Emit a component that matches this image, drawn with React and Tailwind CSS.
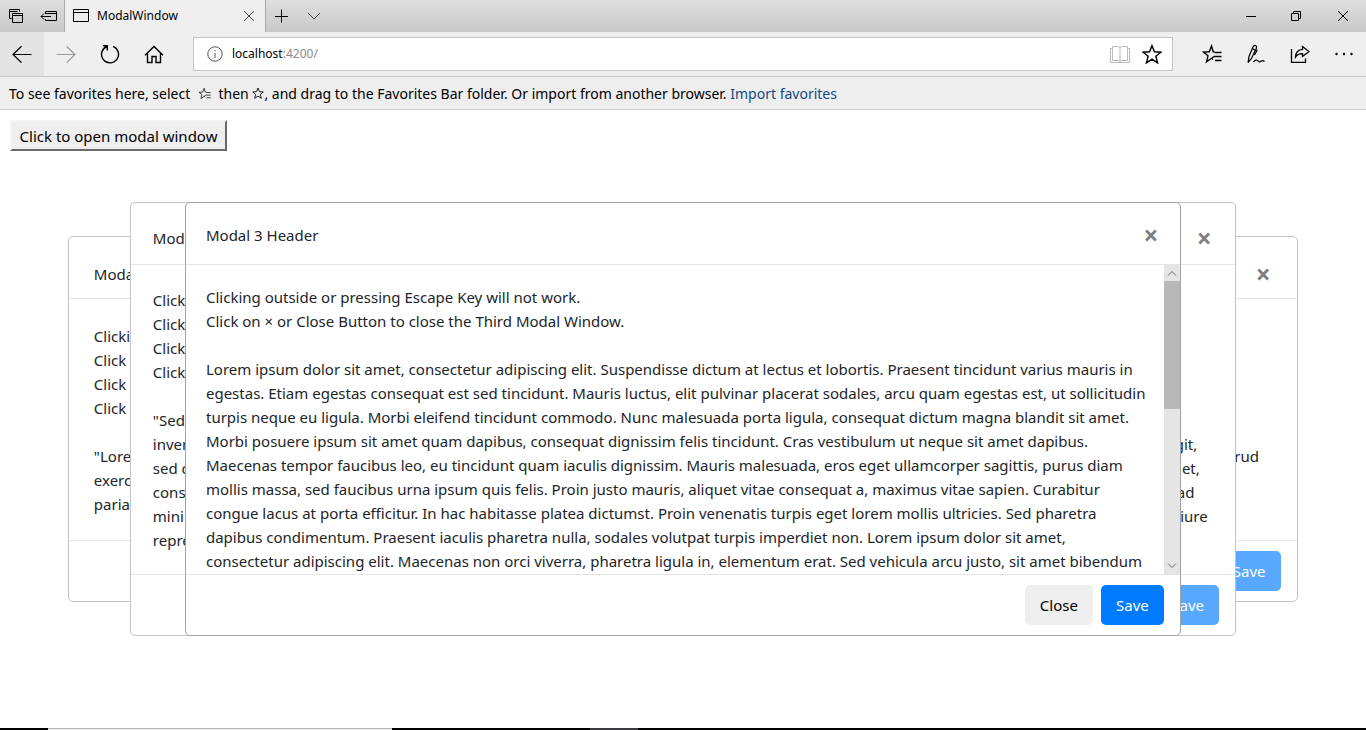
import React from "react";

const stroke = { fill: "none", stroke: "currentColor", strokeWidth: 1 };

const STAR = "M9 1.5 L11.2 7 L17 7.4 L12.5 11 L14 17 L9 13.7 L4 17 L5.5 11 L1 7.4 L6.8 7 Z";

function TabsIcon() {
  return (
    <svg width="16" height="16" viewBox="0 0 16 16" {...stroke} className="shrink-0">
      <path d="M3.500 10.500H1.500V1.500H11.500V3.500M1.500 3.500H9.500" />
      <path d="M4.500 5.500H14.500V14.500H4.500ZM4.500 7.500H14.500" />
    </svg>
  );
}

function SetAsideIcon() {
  return (
    <svg width="18" height="16" viewBox="0 0 18 16" {...stroke} className="shrink-0">
      <path d="M5.500 6V3.500H16.500V12.500H5.500V11M5.500 5.500H16.500M1 8.500H11M4 5.500L1 8.500L4 11.500" />
    </svg>
  );
}

function PageIcon() {
  return (
    <svg width="16" height="14" viewBox="0 0 16 14" {...stroke} className="shrink-0">
      <path d="M.5 .5H15.500V12.500H.5ZM.5 3.500H15.500" />
    </svg>
  );
}

function CrossIcon() {
  return (
    <svg width="12" height="12" viewBox="0 0 12 12" {...stroke}>
      <path d="M1 1L11 11M11 1L1 11" />
    </svg>
  );
}

function FavStarIcon({ size, weight = 1.4 }) {
  return (
    <svg width={size} height={size} viewBox="0 0 20 20" fill="none" stroke="currentColor" strokeWidth={weight} className="shrink-0">
      <path d="M12.600 8.500H19.500M12 12.500H19.500M13 16.500H19.500" />
      <path d="M12.600 8L11.200 7.800L9.500 2L7.300 7.800L1.500 8.100L6 11.800L4.500 17.800L9.500 14.300L11 15.500M9.500 14.300L12 12.500" />
    </svg>
  );
}

function StarIcon({ size, weight = 1.4 }) {
  return (
    <svg width={size} height={size} viewBox="0 0 18 18" fill="none" stroke="currentColor" strokeWidth={weight} className="shrink-0">
      <path d={STAR} />
    </svg>
  );
}

function ToolButton({ label, className = "", children }) {
  return (
    <button type="button" aria-label={label} className={"flex h-11 w-11 items-center justify-center " + className}>
      {children}
    </button>
  );
}

function TitleBar() {
  return (
    <div className="flex h-8 items-stretch bg-linear-to-b from-[#dedede] to-[#c9c9c9] text-black">
      <div className="flex w-16 items-center gap-4 pl-2">
        <TabsIcon />
        <SetAsideIcon />
      </div>
      <div className="flex w-[202px] items-center border-x border-[#a8a8a8] bg-[#efefef] pr-[10px] pl-2">
        <PageIcon />
        <span className="ml-2 flex-1 text-[12px]">ModalWindow</span>
        <button type="button" aria-label="Close tab" className="text-[#444]"><CrossIcon /></button>
      </div>
      <button type="button" aria-label="New tab" className="flex w-8 items-center justify-center">
        <svg width="14" height="14" viewBox="0 0 14 14" {...stroke}><path d="M6.500 .5V13.500M0 7.500H13" /></svg>
      </button>
      <button type="button" aria-label="Tab previews" className="flex w-8 items-center justify-center text-[#444]">
        <svg width="14" height="8" viewBox="0 0 14 8" {...stroke}><path d="M1 1L7 7L13 1" /></svg>
      </button>
      <div className="flex-1" />
      <button type="button" aria-label="Minimize" className="flex w-[46px] items-center justify-center">
        <svg width="10" height="10" viewBox="0 0 10 10" {...stroke}><path d="M0 5.500H10" /></svg>
      </button>
      <button type="button" aria-label="Restore" className="flex w-[46px] items-center justify-center">
        <svg width="12" height="10" viewBox="0 0 12 10" {...stroke}><path d="M.5 2.500H7.500V9.500H.5ZM2.500 2.500V.5H9.500V7.500H7.500" /></svg>
      </button>
      <button type="button" aria-label="Close" className="flex w-[46px] items-center justify-center">
        <CrossIcon />
      </button>
    </div>
  );
}

function ToolBar() {
  return (
    <div className="flex h-[45px] items-start border-b border-[#cbcbcb] bg-[#efefef] text-black">
      <ToolButton label="Back" className="bg-[#e4e4e4]">
        <svg width="20" height="18" viewBox="0 0 20 18" fill="none" stroke="currentColor" strokeWidth="1.2"><path d="M1 9.500H19.500M9.500 1.300L1 9.500L9.500 17.700" /></svg>
      </ToolButton>
      <ToolButton label="Forward" className="text-[#9b9b9b]">
        <svg width="20" height="18" viewBox="0 0 20 18" fill="none" stroke="currentColor" strokeWidth="1.2"><path d="M.5 9.500H19M10.500 1.300L19 9.500L10.500 17.700" /></svg>
      </ToolButton>
      <ToolButton label="Refresh">
        <svg width="20" height="20" viewBox="0 0 20 20" fill="none" stroke="currentColor" strokeWidth="1.4"><path d="M6.800 2.500A8.500 8.500 0 1 0 13 2.400M3 1.800H7.300V6.500" /></svg>
      </ToolButton>
      <ToolButton label="Home">
        <svg width="20" height="20" viewBox="0 0 20 20" fill="none" stroke="currentColor" strokeWidth="1.4"><path d="M1 11.200L10 2.500L19 11.200M3.500 9.500V18.500H8V12.500H12V18.500H16.500V9.500" /></svg>
      </ToolButton>
      <div className="mt-[5px] ml-[17px] flex h-[34px] flex-1 items-center border border-[#c4c4c4] bg-white pr-2 pl-3">
        <svg width="18" height="18" viewBox="0 0 18 18" {...stroke} className="shrink-0 text-[#555]"><circle cx="9" cy="9" r="7.200" /><path d="M9 8V13M9 5V6.300" /></svg>
        <div className="relative ml-2 flex-1 text-[12px]">
          <input aria-label="Address" defaultValue="localhost:4200/" className="w-full bg-transparent text-transparent outline-none" />
          <span aria-hidden="true" className="pointer-events-none absolute inset-0 flex items-center text-[#8a8a8a]">
            <span className="text-black">localhost</span>:4200/
          </span>
        </div>
        <svg width="20" height="20" viewBox="0 0 20 20" {...stroke} className="mr-3 shrink-0 text-[#bcbcbc]">
          <path d="M2.500 2.500H7.500Q10 2.500 10 4Q10 2.500 12.500 2.500H17.500V16.500H12Q10 16.500 10 18Q10 16.500 8 16.500H2.500ZM10 4V18M2.500 4.500H.5V18.500H19.500V4.500H17.500" />
        </svg>
        <button type="button" aria-label="Add to favorites" className="mr-[2px]"><StarIcon size="20" weight={1.3} /></button>
      </div>
      <div className="ml-[17px] flex">
        <ToolButton label="Favorites hub"><FavStarIcon size="20" /></ToolButton>
        <ToolButton label="Notes">
          <svg width="20" height="20" viewBox="0 0 20 20" fill="none" stroke="currentColor" strokeWidth="1.2">
            <path d="M2 18.500L3 12.500L7 3Q8 1 9.700 1.500Q11 2.200 10.300 4.200L5.500 14.500L2 18.500M6.300 4.600L8.800 6M9.800 5.500L11 6.500L8.500 11M7.500 18Q10 14.800 12 16.800Q13.500 18.600 15 17.300Q16.800 16 18.500 17.500" />
          </svg>
        </ToolButton>
        <ToolButton label="Share">
          <svg width="20" height="20" viewBox="0 0 20 20" fill="none" stroke="currentColor" strokeWidth="1.300">
            <path d="M1.500 5V18.300H15.500V14.500M12.500 2.500L19 7.500L12.500 12.500V9.700Q8 9.500 5.500 13Q6 5.700 12.500 5.300Z" />
          </svg>
        </ToolButton>
        <ToolButton label="Settings and more">
          <svg width="20" height="4" viewBox="0 0 20 4" fill="currentColor"><circle cx="2.500" cy="2" r="1.200" /><circle cx="10" cy="2" r="1.200" /><circle cx="17.500" cy="2" r="1.200" /></svg>
        </ToolButton>
      </div>
    </div>
  );
}

function FavoritesBar() {
  return (
    <div className="flex h-[33px] items-center border-b border-[#cbcbcb] bg-[#eeeeee] pl-[9px] text-[14px] whitespace-pre text-black">
      <span>To see favorites here, select </span>
      <span className="mx-1"><FavStarIcon size="13" weight={1.1} /></span>
      <span> then </span>
      <StarIcon size="12" weight={1.3} />
      <span>, and drag to the Favorites Bar folder. Or import from another browser. </span>
      <a href="#import" className="text-[#0f4b85]">Import favorites</a>
    </div>
  );
}

function Lines({ lines }) {
  return lines.map((line, i) => (
    <p key={i} className="h-6 whitespace-nowrap">{line}</p>
  ));
}

function Scrollbar() {
  return (
    <div aria-hidden="true" className="flex w-4 shrink-0 flex-col items-center bg-[#e5e5e5] text-[#666]">
      <svg width="16" height="16" viewBox="0 0 16 16" {...stroke}><path d="M4 10.500L8 6.500L12 10.500" /></svg>
      <div className="h-32 w-full bg-[#b8b8b8]" />
      <div className="flex-1" />
      <svg width="16" height="16" viewBox="0 0 16 16" {...stroke}><path d="M4 5.500L8 9.500L12 5.500" /></svg>
    </div>
  );
}

function Modal({ title, lines, className, scrollable = false, inactive = false }) {
  return (
    <section role="dialog" aria-label={title} className={"isolate z-10 col-start-1 row-start-1 rounded-[5px] border bg-white " + className}>
      <header className="flex h-[62px] items-start justify-between border-b border-[#e5e5e5] px-[2%] pt-[2%]">
        <h2 className="leading-6">{title}</h2>
        <button type="button" aria-label="Close dialog" className="w-[18px] text-center text-[26px] leading-6 font-bold text-[#7f7f7f]">×</button>
      </header>
      <div className={scrollable ? "flex h-[309px]" : "flex"}>
        <div className="min-w-0 flex-1 overflow-hidden p-[2%]"><Lines lines={lines} /></div>
        {scrollable && <Scrollbar />}
      </div>
      <footer className="flex justify-end gap-2 border-t border-[#e5e5e5] px-4 py-[10px]">
        <button type="button" disabled={inactive} className="h-10 w-[68px] rounded-[5px] bg-[#efefef] text-black disabled:opacity-65">Close</button>
        <button type="button" disabled={inactive} className="h-10 w-[63px] rounded-[5px] bg-[#007bff] text-white disabled:opacity-65">Save</button>
      </footer>
    </section>
  );
}

const FIRST = [
  "Clicking outside the window will close the First Modal Window.",
  "Click on Escape Key to close the First Modal Window.",
  "Click on × or Close Button to close the First Modal Window.",
  "Click on Save Button to open the Second Modal Window.",
  "",
  "\"Lorem ipsum dolor sit amet, consectetur adipiscing elit, sed do eiusmod tempor incididunt ut labore et dolore magna aliqua. Ut enim ad minim veniam, quis nostrud",
  "exercitation ullamco laboris nisi ut aliquip ex ea commodo consequat. Duis aute irure dolor in reprehenderit in voluptate velit esse cillum dolore eu fugiat nulla",
  "pariatur. Excepteur sint occaecat cupidatat non proident, sunt in culpa qui officia deserunt mollit anim id est laborum.\"",
];

const SECOND = [
  "Click outside the window to close the Second Modal Window.",
  "Click on Escape Key to close the Second Modal Window.",
  "Click on × or Close Button to close the Second Modal Window.",
  "Click on Save Button to open the Third Modal Window.",
  "",
  "\"Sed ut perspiciatis unde omnis iste natus error sit voluptatem accusantium doloremque laudantium, totam rem aperiam, eaque ipsa quae ab illo",
  "inventore veritatis et quasi architecto beatae vitae dicta sunt explicabo. Nemo enim ipsam voluptatem quia voluptas sit aspernatur aut odit aut fugit,",
  "sed quia consequuntur magni dolores eos qui ratione voluptatem sequi nesciunt. Neque porro quisquam est, qui dolorem ipsum quia dolor sit amet,",
  "consectetur, adipisci velit, sed quia non numquam eius modi tempora incidunt ut labore et dolore magnam aliquam quaerat voluptatem. Ut enim ad",
  "minima veniam, quis nostrum exercitationem ullam corporis suscipit laboriosam, nisi ut aliquid ex ea commodi consequatur? Quis autem vel eum iure",
  "reprehenderit qui in ea voluptate velit esse quam nihil molestiae consequatur, vel illum qui dolorem eum fugiat quo voluptas nulla pariatur?\"",
];

const THIRD = [
  "Clicking outside or pressing Escape Key will not work.",
  "Click on × or Close Button to close the Third Modal Window.",
  "",
  "Lorem ipsum dolor sit amet, consectetur adipiscing elit. Suspendisse dictum at lectus et lobortis. Praesent tincidunt varius mauris in",
  "egestas. Etiam egestas consequat est sed tincidunt. Mauris luctus, elit pulvinar placerat sodales, arcu quam egestas est, ut sollicitudin",
  "turpis neque eu ligula. Morbi eleifend tincidunt commodo. Nunc malesuada porta ligula, consequat dictum magna blandit sit amet.",
  "Morbi posuere ipsum sit amet quam dapibus, consequat dignissim felis tincidunt. Cras vestibulum ut neque sit amet dapibus.",
  "Maecenas tempor faucibus leo, eu tincidunt quam iaculis dignissim. Mauris malesuada, eros eget ullamcorper sagittis, purus diam",
  "mollis massa, sed faucibus urna ipsum quis felis. Proin justo mauris, aliquet vitae consequat a, maximus vitae sapien. Curabitur",
  "congue lacus at porta efficitur. In hac habitasse platea dictumst. Proin venenatis turpis eget lorem mollis ultricies. Sed pharetra",
  "dapibus condimentum. Praesent iaculis pharetra nulla, sodales volutpat turpis imperdiet non. Lorem ipsum dolor sit amet,",
  "consectetur adipiscing elit. Maecenas non orci viverra, pharetra ligula in, elementum erat. Sed vehicula arcu justo, sit amet bibendum",
];

export default function App() {
  return (
    <div className="flex min-h-screen flex-col bg-white font-['Noto_Sans','Open_Sans',sans-serif]">
      <TitleBar />
      <ToolBar />
      <FavoritesBar />
      <main className="relative flex flex-1 flex-col text-[15px] leading-6 text-[#212529]">
        <div className="px-[10px] pt-[10px]">
          <button type="button" className="flex h-[31px] w-[217px] items-center justify-center border-2 border-t-[#f5f5f5] border-r-[#696969] border-b-[#696969] border-l-[#f5f5f5] bg-[#efefef] whitespace-nowrap text-black">
            Click to open modal window
          </button>
        </div>
        <div className="absolute inset-0 grid place-items-center">
          <Modal title="Modal 1 Header" lines={FIRST} inactive className="w-[90%] border-[#c4c4c4]" />
          <Modal title="Modal 2 Header" lines={SECOND} inactive className="w-[81%] border-[#c4c4c4]" />
          <Modal title="Modal 3 Header" lines={THIRD} scrollable className="w-[72.9%] border-[#a3a3a3]" />
        </div>
      </main>
      <div className="flex h-[2px] bg-black">
        <div className="ml-12 w-[344px] border-t border-[#b5b5b5] bg-[#eeeeee]" />
        <div className="ml-[198px] w-12 bg-[#3a3a3f]" />
      </div>
    </div>
  );
}
